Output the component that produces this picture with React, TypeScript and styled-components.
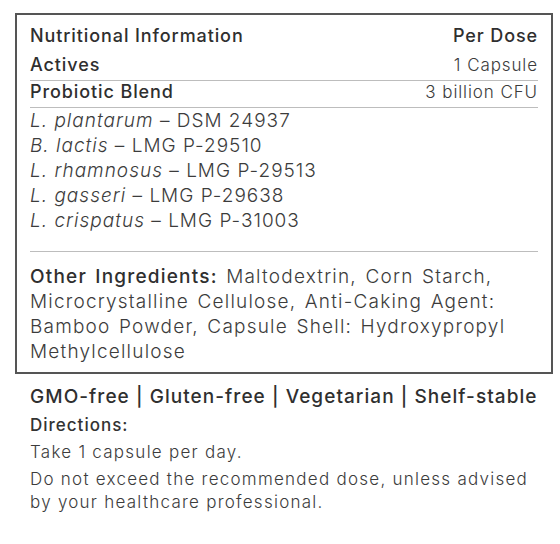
import React from "react";
import styled, { createGlobalStyle } from "styled-components";

const Global = createGlobalStyle`
  html, body { margin: 0; padding: 0; background: #fff; }
  body { font-family: "Inter", "Noto Sans", sans-serif; color: #333; }
`;

const Page = styled.div`
  width: 560px;
  padding: 13px 7px 0 15px;
  box-sizing: border-box;
`;

const Box = styled.div`
  border: 2px solid #555;
  width: 538px;
  box-sizing: border-box;
  padding: 11px 13px 8px 13px;
`;

const Row = styled.div<{ $pt?: number; $pb?: number; $line?: boolean }>`
  display: flex;
  justify-content: space-between;
  align-items: baseline;
  line-height: 20px;
  padding: ${(p) => p.$pt ?? 0}px 0 ${(p) => p.$pb ?? 0}px;
  border-bottom: ${(p) => (p.$line ? "1px solid #bdbdbd" : "none")};
`;

const Label = styled.span`
  font-size: 18px;
  font-weight: 500;
  letter-spacing: 0.9px;
  color: #2f2f2f;
`;

const Value = styled.span<{ $strong?: boolean }>`
  font-size: ${(p) => (p.$strong ? 18 : 17)}px;
  font-weight: ${(p) => (p.$strong ? 500 : 300)};
  letter-spacing: 0.9px;
  color: ${(p) => (p.$strong ? "#2f2f2f" : "#3c3c3c")};
`;

const Strains = styled.div`
  padding: 0 0 18px;
  border-bottom: 1px solid #bdbdbd;
`;

const Strain = styled.div`
  font-size: 19px;
  line-height: 25px;
  letter-spacing: 1px;
  color: #3c3c3c;
  font-weight: 300;
  em { font-style: italic; }
`;

const Other = styled.p`
  margin: 12px 0 0;
  font-size: 19px;
  line-height: 25px;
  letter-spacing: 1.2px;
  word-spacing: 2px;
  color: #3c3c3c;
  font-weight: 300;
  b { font-weight: 500; color: #2f2f2f; }
`;

const Below = styled.div`
  padding: 10px 0 0 15px;
  width: 523px;
`;

const Claims = styled.div`
  font-size: 19px;
  font-weight: 500;
  letter-spacing: 1.05px;
  color: #2f2f2f;
  line-height: 26px;
`;

const Heading = styled.div`
  margin-top: 3px;
  font-size: 17px;
  font-weight: 500;
  letter-spacing: 1px;
  color: #333;
  line-height: 24px;
`;

const Para = styled.p`
  margin: 4px 0 0;
  max-width: 505px;
  font-size: 17px;
  font-weight: 300;
  letter-spacing: 1.25px;
  line-height: 23px;
  color: #3c3c3c;
`;

const strains: [string, string][] = [
  ["L. plantarum", "DSM 24937"],
  ["B. lactis", "LMG P-29510"],
  ["L. rhamnosus", "LMG P-29513"],
  ["L. gasseri", "LMG P-29638"],
  ["L. crispatus", "LMG P-31003"],
];

export default function App() {
  return (
    <Page>
      <Global />
      <Box>
        <Row>
          <Label>Nutritional Information</Label>
          <Value $strong>Per Dose</Value>
        </Row>
        <Row $pt={9} $pb={5} $line>
          <Label>Actives</Label>
          <Value>1 Capsule</Value>
        </Row>
        <Row $pt={1} $pb={5} $line>
          <Label>Probiotic Blend</Label>
          <Value>3 billion CFU</Value>
        </Row>
        <Strains>
          {strains.map(([n, c]) => (
            <Strain key={n}>
              <em>{n}</em> – {c}
            </Strain>
          ))}
        </Strains>
        <Other>
          <b>Other Ingredients:</b> Maltodextrin, Corn Starch, Microcrystalline Cellulose, Anti-Caking Agent: Bamboo Powder, Capsule Shell: Hydroxypropyl Methylcellulose
        </Other>
      </Box>
      <Below>
        <Claims>GMO-free | Gluten-free | Vegetarian | Shelf-stable</Claims>
        <Heading>Directions:</Heading>
        <Para>Take 1 capsule per day.</Para>
        <Para>Do not exceed the recommended dose, unless advised by your healthcare professional.</Para>
      </Below>
    </Page>
  );
}
